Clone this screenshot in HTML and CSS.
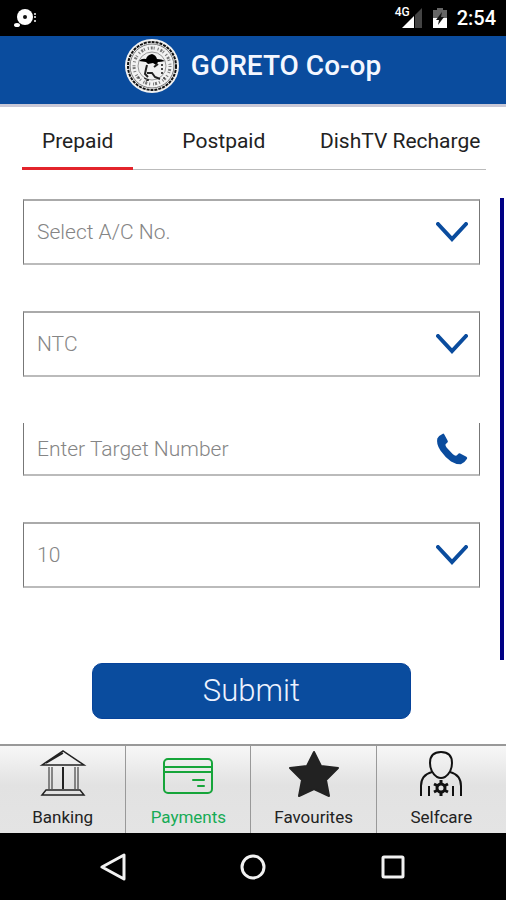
FILE: index.html
```html
<!DOCTYPE html>
<html lang="en">
<head>
<meta charset="utf-8">
<meta name="viewport" content="width=device-width, initial-scale=1">
<title>GORETO Co-op</title>
<link rel="stylesheet" href="styles.css">
</head>
<body>
<div class="status">
  <svg class="status-app" viewBox="0 0 24 20" width="24" height="20" aria-hidden="true">
    <circle cx="11" cy="9" r="8" fill="#fff"/><ellipse cx="3" cy="17" rx="3" ry="2" fill="#fff"/><circle cx="11" cy="9" r="2" fill="#111"/>
    <path d="M20 6h2M20 9h2M20 13h2" stroke="#bbb" stroke-width="2"/>
  </svg>
  <div class="status-right">
    <span class="network">4G</span>
    <svg viewBox="0 0 20 20" width="20" height="20" aria-hidden="true"><path d="M13 7 20 0V20H13z" fill="#444"/><path d="M0 20 12 8V20z" fill="#fff"/></svg>
    <svg class="battery" viewBox="0 0 14 20" width="14" height="20" aria-hidden="true"><path d="M0 2H4V0H10V2H14V10H0z" fill="#666"/><path d="M0 10H14V20H0z" fill="#fff"/><path d="M9 4 3 12H6L5 17 11 9H8z" fill="#111"/></svg>
    <span class="clock">2:54</span>
  </div>
</div>
<header class="header">
  <svg class="seal" viewBox="0 0 54 54" width="54" height="54" aria-hidden="true">
    <circle cx="27" cy="27" r="27" fill="#f2f2f2"/>
    <circle cx="27" cy="27" r="24" fill="none" stroke="#111" stroke-width="2" stroke-dasharray="3 1"/>
    <circle cx="27" cy="27" r="22" fill="none" stroke="#777" stroke-width="1"/>
    <circle cx="27" cy="27" r="18" fill="none" stroke="#777" stroke-width="3" stroke-dasharray="1 2 2 1 1 3"/>
    <circle cx="27" cy="27" r="14" fill="none" stroke="#999" stroke-width="1"/>
    <path d="M14 22q3-3 7-2 1-4 6-5 4 1 5 5 5 0 8 2-4 1-7 1l-2 3-3-2-5 1-2-2z" fill="#000"/>
    <path d="M22 26l-1 4-1 5 3 3M33 25l-4 3M22 34h5l3 4 5 2" fill="none" stroke="#222" stroke-width="2"/>
    <path d="M37 25v10" fill="none" stroke="#444" stroke-width="2" stroke-dasharray="2 2"/>
    <path d="M19 39l5 2-3 1M13 39h2M38 39h2" fill="#999" stroke="#222"/>
  </svg>
  <h1 class="title">GORETO Co-op</h1>
</header>
<main class="main">
  <nav class="tabs">
    <a class="tab tab-active" href="#prepaid">Prepaid</a>
    <a class="tab" href="#postpaid">Postpaid</a>
    <a class="tab" href="#dishtv">DishTV Recharge</a>
  </nav>
  <form class="form">
    <div class="fields">
      <div class="field">
        <select class="control" aria-label="Account number"><option>Select A/C No.</option></select>
        <svg class="chevron" viewBox="0 0 32 20" width="32" height="20" aria-hidden="true"><path d="M2 2 16 17 30 2"/></svg>
      </div>
      <div class="field">
        <select class="control" aria-label="Operator"><option>NTC</option></select>
        <svg class="chevron" viewBox="0 0 32 20" width="32" height="20" aria-hidden="true"><path d="M2 2 16 17 30 2"/></svg>
      </div>
      <div class="field field-number">
        <input class="control" type="tel" aria-label="Target number" placeholder="Enter Target Number">
        <svg class="phone" viewBox="0 0 96 98" width="32" height="32" aria-hidden="true"><path d="M20 2Q8 7 3 17-1 35 13 54 27 74 45 87 60 96 75 96 87 91 94 79 96 76 92 73L73 63Q69 61 67 64L62 69Q57 71 50 64L32 45Q26 37 29 34L34 29Q37 26 34 22L24 4Q22 1 20 2z"/></svg>
      </div>
      <div class="field">
        <select class="control" aria-label="Amount"><option>10</option></select>
        <svg class="chevron" viewBox="0 0 32 20" width="32" height="20" aria-hidden="true"><path d="M2 2 16 17 30 2"/></svg>
      </div>
    </div>
    <button class="submit" type="submit">Submit</button>
  </form>
</main>
<nav class="bottom">
  <a class="item" href="#banking">
    <svg class="icon" viewBox="0 0 52 48" width="52" height="48" fill="none" stroke="#222" aria-hidden="true"><path d="M5 16 26 2 47 16zM9 14 26 4M5 46H47L43 41H9z" stroke-width="1.5"/><path d="M12 18V40M15 18V40M38 18V40M41 18V40" /><path d="M26 18V40" stroke-width="2"/></svg>
    <span>Banking</span>
  </a>
  <a class="item item-active" href="#payments">
    <svg class="icon" viewBox="0 0 52 48" width="52" height="48" fill="none" stroke="#16a53a" stroke-width="2" stroke-linecap="round" aria-hidden="true"><rect x="2" y="10" width="48" height="34" rx="4"/><path d="M2 18H50M2 23H50M31 31H42M36 37H42"/></svg>
    <span>Payments</span>
  </a>
  <a class="item" href="#favourites">
    <svg class="icon" viewBox="0 0 52 48" width="52" height="48" fill="#222" stroke="#222" stroke-width="2" stroke-linejoin="round" aria-hidden="true"><path d="M26 3 33 17 50 19 38 31 41 47 26 40 11 47 14 31 2 19 19 17z"/></svg>
    <span>Favourites</span>
  </a>
  <a class="item" href="#selfcare">
    <svg class="icon" viewBox="0 0 52 48" width="52" height="48" fill="none" stroke="#111" stroke-width="2" aria-hidden="true"><path d="M26 3Q37 3 37 14 37 23 30 28 26 30 22 28 15 23 15 14 15 3 26 3zM17 23Q6 26 6 37V47M35 23Q46 26 46 37V47M14 37V47M38 37V47"/><circle cx="26" cy="39" r="4" stroke-width="3"/><path d="M26 31V35M26 43V47M19 35 23 37M29 41 33 43M33 35 29 37M23 41 19 43" stroke-width="3"/></svg>
    <span>Selfcare</span>
  </a>
</nav>
<div class="system">
  <button class="key" type="button" aria-label="Back"><svg viewBox="0 0 28 28" width="28" height="28"><path d="M25 2V26L3 14z"/></svg></button>
  <button class="key" type="button" aria-label="Home"><svg viewBox="0 0 28 28" width="28" height="28"><circle cx="14" cy="14" r="11"/></svg></button>
  <button class="key" type="button" aria-label="Recent apps"><svg viewBox="0 0 28 28" width="28" height="28"><rect x="4" y="4" width="20" height="20" rx="1"/></svg></button>
</div>
</body>
</html>
```
FILE: styles.css
```css
* { box-sizing: border-box; }
body {
  margin: 0;
  min-height: 100vh;
  display: flex;
  flex-direction: column;
  background: #fff;
  color: #222;
  font-family: Roboto, "Liberation Sans", sans-serif;
}
a { color: inherit; text-decoration: none; }
.status {
  height: 36px;
  padding: 0 10px 0 14px;
  display: flex;
  align-items: center;
  justify-content: space-between;
  background: #000;
  color: #fff;
}
.status-right { display: flex; align-items: center; }
.network { font-size: 12px; font-weight: 500; line-height: 12px; align-self: flex-start; margin-right: -8px; }
.battery { margin: 0 10px 0 11px; }
.clock { font-size: 20px; font-weight: 500; line-height: 24px; }
.header {
  height: 71px;
  padding-bottom: 8px;
  display: flex;
  align-items: center;
  justify-content: center;
  gap: 12px;
  background: #0a4c9e;
  border-bottom: 3px solid #c9c8d6;
}
.title { margin: 0; color: #f4f7ff; font-size: 28px; font-weight: 500; line-height: 32px; }
.main { flex: 1; display: flex; flex-direction: column; }
.tabs {
  margin: 0 20px 28px 22px;
  display: grid;
  grid-template-columns: 24% 39% 37%;
  border-bottom: 1px solid #bbb;
}
.tab {
  height: 63px;
  padding-top: 20px;
  margin-bottom: -1px;
  font-size: 21px;
  line-height: 28px;
  text-align: center;
  white-space: nowrap;
}
.tab-active { border-bottom: 3px solid #e3242b; }
.form { flex: 1; display: flex; flex-direction: column; }
.fields {
  flex: 1;
  margin-right: 2px;
  padding: 1px 20px 0 23px;
  display: flex;
  flex-direction: column;
  gap: 46px;
  border-right: 4px solid #000085;
}
.field {
  height: 66px;
  display: grid;
  align-items: center;
  border: 1px solid #777;
  border-top: 2px solid #aaa;
  border-bottom: 2px solid #bbb;
}
.field-number { height: 53px; border-top: 0; }
.control {
  grid-area: 1 / 1;
  width: 100%;
  height: 100%;
  padding: 0 60px 0 13px;
  appearance: none;
  border: 0;
  background: none;
  color: #858585;
  font: 300 21px/28px Roboto, "Liberation Sans", sans-serif;
}
.control::placeholder { color: #858585; }
.chevron, .phone { grid-area: 1 / 1; justify-self: end; margin-right: 11px; pointer-events: none; }
.chevron { fill: none; stroke: #0a4c9e; stroke-width: 4; stroke-linecap: round; }
.phone { fill: #0a4c9e; }
.submit {
  width: 63%;
  height: 56px;
  margin: 3px 0 25px 92px;
  padding: 0;
  border: 1px solid #07439a;
  border-radius: 10px;
  background: #0a4c9e;
  color: #eef2ff;
  font: 300 31px/40px Roboto, "Liberation Sans", sans-serif;
}
.bottom {
  display: grid;
  grid-template-columns: 25fr 25fr 25fr 26fr;
  border-top: 2px solid #999;
  background: linear-gradient(#f7f7f7, #e2e2e2 45%, #e4e4e4);
}
.item {
  height: 87px;
  padding-top: 3px;
  display: flex;
  flex-direction: column;
  align-items: center;
  gap: 8px;
  font-size: 17px;
  line-height: 24px;
}
.item + .item { border-left: 1px solid #999; }
.item-active { color: #17ab55; }
.system {
  height: 67px;
  padding: 0 43px;
  display: grid;
  grid-template-columns: repeat(3, 1fr);
  place-items: center;
  background: #000;
}
.key { display: flex; padding: 0; border: 0; background: none; }
.key svg { fill: none; stroke: #f2f2f2; stroke-width: 3; stroke-linejoin: round; }
```
